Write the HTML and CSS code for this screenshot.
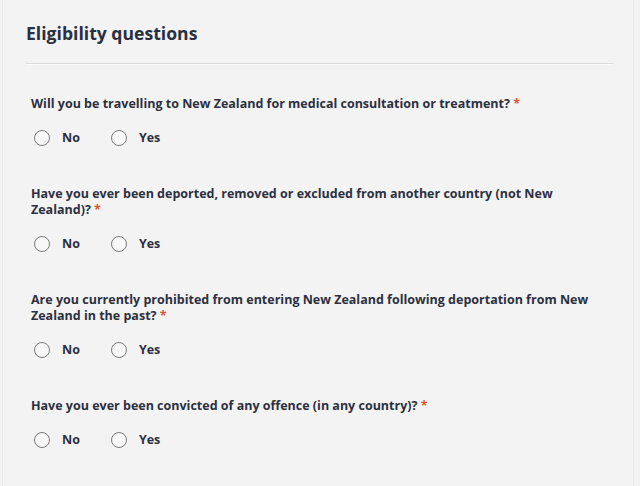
FILE: index.html
```html
<!DOCTYPE html>
<html lang="en">
<head>
<meta charset="utf-8">
<title>Eligibility questions</title>
<link rel="stylesheet" href="styles.css">
</head>
<body>
<div class="page">
  <header class="section-head">
    <h2 class="title">Eligibility questions</h2>
  </header>
  <div class="questions">
    <fieldset class="question">
      <legend class="q-text required">Will you be travelling to New Zealand for medical consultation or treatment?</legend>
      <div class="options">
        <label class="opt"><span class="radio"></span><span class="opt-label">No</span></label>
        <label class="opt"><span class="radio"></span><span class="opt-label">Yes</span></label>
      </div>
    </fieldset>
    <fieldset class="question">
      <legend class="q-text required">Have you ever been deported, removed or excluded from another country (not New Zealand)?</legend>
      <div class="options">
        <label class="opt"><span class="radio"></span><span class="opt-label">No</span></label>
        <label class="opt"><span class="radio"></span><span class="opt-label">Yes</span></label>
      </div>
    </fieldset>
    <fieldset class="question">
      <legend class="q-text required">Are you currently prohibited from entering New Zealand following deportation from New Zealand in the past?</legend>
      <div class="options">
        <label class="opt"><span class="radio"></span><span class="opt-label">No</span></label>
        <label class="opt"><span class="radio"></span><span class="opt-label">Yes</span></label>
      </div>
    </fieldset>
    <fieldset class="question">
      <legend class="q-text required">Have you ever been convicted of any offence (in any country)?</legend>
      <div class="options">
        <label class="opt"><span class="radio"></span><span class="opt-label">No</span></label>
        <label class="opt"><span class="radio"></span><span class="opt-label">Yes</span></label>
      </div>
    </fieldset>
  </div>
</div>
</body>
</html>
```
FILE: styles.css
```css
html, body {
  margin: 0;
  padding: 0;
  background: #f3f3f3;
}
body {
  font-family: "Open Sans", "Noto Sans", sans-serif;
  color: #2c3040;
}
.page {
  margin: 0 6px 0 2px;
  min-height: 486px;
  border-left: 1px solid #e9e9e9;
  border-right: 1px solid #e9e9e9;
  box-sizing: border-box;
}
.section-head {
  margin: 0 20px 0 23px;
  padding: 22px 0 19px 0;
  border-bottom: 1px solid #dadada;
  box-shadow: 0 1px 0 #fafafa;
}
.title {
  margin: 0;
  font-size: 17.6px;
  line-height: 22px;
  font-weight: 700;
  color: #2b3040;
}
.questions {
  padding: 32px 20px 0 28px;
}
.question {
  border: 0;
  margin: 0 0 40px 0;
  padding: 0;
  min-width: 0;
}
.q-text {
  padding: 0;
  font-size: 12.5px;
  line-height: 16px;
  font-weight: 700;
  color: #2c3040;
}
.required::after {
  content: " *";
  color: #e0532f;
}
.options {
  display: flex;
  gap: 31px;
  margin-top: 18px;
  padding-left: 3px;
}
.opt {
  display: flex;
  align-items: center;
  gap: 12px;
}
.radio {
  width: 14px;
  height: 14px;
  border: 1px solid #7a7a7a;
  border-radius: 50%;
  background: #f8f8f8;
}
.opt-label {
  font-size: 12.5px;
  line-height: 16px;
  font-weight: 700;
  color: #2c3040;
}
```
